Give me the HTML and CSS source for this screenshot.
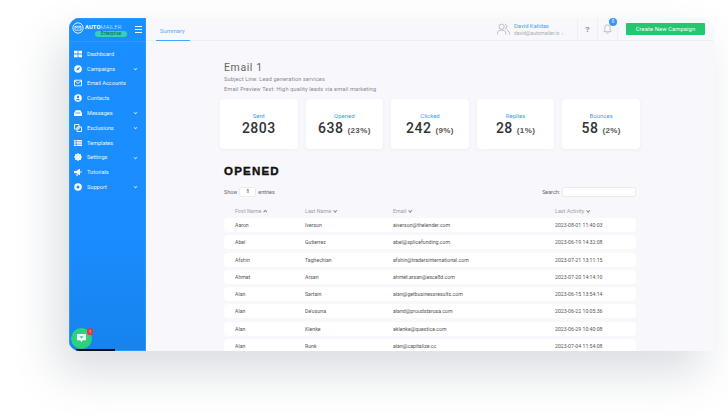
FILE: index.html
```html
<!DOCTYPE html>
<html lang="en">
<head>
<meta charset="utf-8">
<title>Automailer</title>
<link rel="stylesheet" href="styles.css">
</head>
<body>
<div class="window">
  <aside class="sidebar">
    <div class="brand">
      <svg class="brand-icon" viewBox="0 0 14 14"><circle cx="7" cy="7" r="6" fill="none" stroke="#fff" stroke-width="1"/><path d="M3.5 5h7v4.500h-7zM3.500 5l3.500 2.500 3.500-2.500" fill="none" stroke="#fff" stroke-width=".9"/></svg>
      <div class="brand-text">
        <div class="brand-name"><b>AUTO</b>MAILER</div>
        <div class="brand-pill">Enterprise</div>
      </div>
      <div class="burger"><i></i><i></i><i></i></div>
    </div>
    <nav class="nav">
      <div class="nav-item"><svg viewBox="0 0 8 8"><path d="M0 .8h3.600v2.800H0zM4.400 .8H8v2.800H4.400zM0 4.400h3.600v2.800H0zM4.400 4.400H8v2.800H4.400z" fill="#fff"/></svg><span>Dashboard</span></div>
      <div class="nav-item"><svg viewBox="0 0 8 8"><circle cx="4" cy="4" r="3.800" fill="#fff"/><path d="M2 5.500 3.500 3l2.500-1-1 2.500z" fill="#1a8cff"/></svg><span>Campaigns</span><em class="chev"></em></div>
      <div class="nav-item"><svg viewBox="0 0 8 8"><path d="M.5 1.200h7v5.600h-7zM.5 1.500 4 4.500l3.500-3" fill="none" stroke="#fff" stroke-width=".9"/></svg><span>Email Accounts</span></div>
      <div class="nav-item"><svg viewBox="0 0 8 8"><circle cx="4" cy="4" r="3.800" fill="#fff"/><circle cx="4" cy="3" r="1.200" fill="#1a8cff"/><path d="M2 6.200c.4-1.500 3.600-1.500 4 0z" fill="#1a8cff"/></svg><span>Contacts</span></div>
      <div class="nav-item"><svg viewBox="0 0 8 8"><path d="M0 4.200 1.600 1.200h4.800L8 4.200v2.800H0z" fill="#fff"/><path d="M1.500 4h5" stroke="#1a8cff" stroke-width=".8"/></svg><span>Messages</span><em class="chev"></em></div>
      <div class="nav-item"><svg viewBox="0 0 8 8"><path d="M.5.500h4.500v4.500H.5zM3 3h4.500v4.500H3z" fill="none" stroke="#fff" stroke-width=".9"/></svg><span>Exclusions</span><em class="chev"></em></div>
      <div class="nav-item"><svg viewBox="0 0 8 8"><path d="M0 1h1.800v1.500H0zM2.500 1H8v1.500H2.500zM0 3.300h1.800v1.500H0zM2.500 3.300H8v1.500H2.500zM0 5.600h1.800v1.500H0zM2.500 5.600H8v1.500H2.500z" fill="#fff"/></svg><span>Templates</span></div>
      <div class="nav-item"><svg viewBox="0 0 8 8"><circle cx="4" cy="4" r="2.400" fill="none" stroke="#fff" stroke-width="1.800"/><path d="M4 0v8M0 4h8M1.200 1.200l5.600 5.600M6.800 1.200 1.200 6.800" stroke="#fff" stroke-width="1"/></svg><span>Settings</span><em class="chev"></em></div>
      <div class="nav-item"><svg viewBox="0 0 8 8"><path d="M0 3h2l4-2.200v6.400L2 5H0z" fill="#fff"/><path d="M2 5l.6 2.500h1L3.200 5M7 3v2" stroke="#fff" stroke-width=".8"/></svg><span>Tutorials</span></div>
      <div class="nav-item"><svg viewBox="0 0 8 8"><circle cx="4" cy="4" r="3.800" fill="#fff"/><circle cx="4" cy="4" r="1.500" fill="#1a8cff"/></svg><span>Support</span><em class="chev"></em></div>
    </nav>
    <div class="chat">
      <svg viewBox="0 0 12 12"><path d="M1 1h10v7H7.500L6 10 4.500 8H1z" fill="#fff"/><path d="M3.500 3.500h5L6 6z" fill="#2bd17e"/></svg>
      <span class="chat-badge">1</span>
    </div>
    <div class="blackbar"></div>
  </aside>
  <main class="main">
    <header class="topbar">
      <div class="tab">Summary</div>
      <div class="user">
        <svg class="user-icon" viewBox="0 0 14 13"><circle cx="5" cy="4" r="2.800" fill="none" stroke="#a9adb5" stroke-width=".8"/><path d="M.5 12.500V11c0-2 2-3.300 4.500-3.300S9.500 9 9.500 11v1.500M8.500 1.300a2.800 2.800 0 0 1 0 5.400M10.500 7.800c1.700.5 3 1.600 3 3.200v1.500" fill="none" stroke="#a9adb5" stroke-width=".8"/></svg>
        <div class="user-text">
          <div class="user-name">David Kalidas</div>
          <div class="user-mail">david@automailer.io &nbsp;›</div>
        </div>
      </div>
      <div class="tool help">?</div>
      <div class="tool bell">
        <svg viewBox="0 0 10 11"><path d="M5 1a3 3 0 0 0-3 3v3L1 8.500h8L8 7V4a3 3 0 0 0-3-3zM4 9.500a1 1 0 0 0 2 0" fill="none" stroke="#a9adb5" stroke-width=".8"/></svg>
        <span class="bell-badge">0</span>
      </div>
      <div class="action"><button class="create">Create New Campaign</button></div>
    </header>
    <section class="content">
      <h1 class="title">Email 1</h1>
      <p class="meta">Subject Line: Lead generation services</p>
      <p class="meta">Email Preview Text: High quality leads via email marketing</p>
      <div class="cards">
        <div class="card"><div class="card-label">Sent</div><div class="card-value">2803</div></div>
        <div class="card"><div class="card-label">Opened</div><div class="card-value">638 <small>(23%)</small></div></div>
        <div class="card"><div class="card-label">Clicked</div><div class="card-value">242 <small>(9%)</small></div></div>
        <div class="card"><div class="card-label">Replies</div><div class="card-value">28 <small>(1%)</small></div></div>
        <div class="card"><div class="card-label">Bounces</div><div class="card-value">58 <small>(2%)</small></div></div>
      </div>
      <h2 class="section">OPENED</h2>
      <div class="controls">
        <div class="show">Show <span class="select">8</span> entries</div>
        <div class="search">Search: <span class="search-box"></span></div>
      </div>
      <div class="table">
        <div class="row head"><span>First Name<i class="sort up"></i></span><span>Last Name<i class="sort"></i></span><span>Email<i class="sort"></i></span><span>Last Activity<i class="sort"></i></span></div>
        <div class="row"><span>Aaron</span><span>Iverson</span><span>aiverson@thelender.com</span><span>2023-08-01 11:40:03</span></div>
        <div class="row"><span>Abel</span><span>Gutierrez</span><span>abel@splicefunding.com</span><span>2023-06-19 14:32:08</span></div>
        <div class="row"><span>Afshin</span><span>Taghechian</span><span>afshin@tradersinternational.com</span><span>2023-07-21 13:11:15</span></div>
        <div class="row"><span>Ahmet</span><span>Arsan</span><span>ahmet.arsan@exce8d.com</span><span>2023-07-20 14:14:10</span></div>
        <div class="row"><span>Alan</span><span>Sartain</span><span>alan@getbusinessresults.com</span><span>2023-06-15 13:54:14</span></div>
        <div class="row"><span>Alan</span><span>De'osuna</span><span>aland@proudstarusa.com</span><span>2023-06-22 10:05:36</span></div>
        <div class="row"><span>Alan</span><span>Klenke</span><span>aklenke@questice.com</span><span>2023-06-29 10:40:08</span></div>
        <div class="row"><span>Alan</span><span>Runk</span><span>alan@capitalize.cc</span><span>2023-07-04 11:54:08</span></div>
      </div>
    </section>
  </main>
</div>
</body>
</html>
```
FILE: styles.css
```css
* { box-sizing: border-box; }
html, body { margin: 0; height: 417px; overflow: hidden; background: #fff; }
body { padding: 18px 0 0 69px; font-family: "Roboto", "Liberation Sans", sans-serif; color: #555; }

.window {
  width: 645px; height: 333px; display: flex; background: #f7f7fc;
  border-radius: 10px 14px 0 10px; overflow: hidden;
  box-shadow: -12px 22px 45px rgba(70, 90, 110, .2);
}
.sidebar {
  position: relative; width: 77px; flex: none; background: linear-gradient(#1a8fff, #1a8cff 65%, #1683ee); color: #fff;
  box-shadow: inset 0 0 0 1px #2d97ff;
}
.brand { height: 24px; display: flex; align-items: flex-start; padding: 4px 4px 0 3px; border-bottom: 1px solid #3398fd; }
.brand-icon { width: 12px; height: 12px; flex: none; }
.brand-text { width: 44px; margin-left: 1px; }
.brand-name { font-size: 5.800px; line-height: 8px; font-weight: 300; color: #d7eaff; letter-spacing: .1px; white-space: nowrap; margin-top: 1px; }
.brand-name b { font-weight: 700; color: #fff; }
.brand-pill { width: 32px; height: 6px; margin: 0 0 0 10px; border-radius: 3px; background: #35d0b8; color: #0d5a55; font-size: 4.500px; line-height: 6px; text-align: center; }
.burger { width: 7px; margin: 4px 0 0 6px; display: flex; flex-direction: column; gap: 1.500px; }
.burger i { display: block; height: 1.300px; background: #fff; }

.nav { padding-top: 4.500px; }
.nav-item { height: 14.800px; display: flex; align-items: center; padding-left: 5px; font-size: 5.600px; color: #e8f3ff; position: relative; }
.nav-item svg { width: 8px; height: 8px; flex: none; margin-right: 5px; }
.chev { position: absolute; left: 65px; top: 5.500px; width: 3px; height: 3px; border-right: .7px solid #cfe6ff; border-bottom: .7px solid #cfe6ff; transform: rotate(45deg) scale(.85); }

.chat { position: absolute; left: 2px; top: 310px; width: 21px; height: 21px; border-radius: 50%; background: #2bd17e; display: flex; align-items: center; justify-content: center; }
.chat svg { width: 11px; height: 11px; }
.chat-badge { position: absolute; right: -1px; top: 0; width: 6px; height: 7px; border-radius: 3px; background: #f0303c; color: #fff; font-size: 4px; line-height: 7px; text-align: center; }
.blackbar { position: absolute; left: 7px; bottom: 0; width: 39px; height: 2px; background: #0b0b0f; }

.main { flex: 1; min-width: 0; display: flex; flex-direction: column; }
.topbar { height: 23px; flex: none; display: flex; align-items: stretch; padding-left: 10px; border-bottom: 1px solid #eeeef5; }
.tab { width: 34px; height: 23px; padding: 9px 0 0 4px; font-size: 5.800px; line-height: 8px; color: #5aa8f8; border-bottom: 1px solid #3fa6ff; }
.user { display: flex; margin-left: 307px; width: 80px; padding-top: 5px; }
.user-icon { width: 13px; height: 12px; flex: none; margin-right: 4px; }
.user-text { font-size: 5.400px; line-height: 6.500px; }
.user-name { color: #4a9ff8; font-size: 5.800px; }
.user-mail { color: #a9acb4; font-size: 5px; }
.tool { position: relative; width: 20px; border-left: 1px solid #eeeef5; display: flex; align-items: center; justify-content: center; }
.help { font-size: 8px; font-weight: 700; color: #8b8e96; }
.bell { border-right: 1px solid #eeeef5; width: 21px; }
.bell svg { width: 9px; height: 10px; }
.bell-badge { position: absolute; left: 11px; top: 0; width: 8px; height: 8px; border-radius: 50%; background: #3d95f0; color: #fff; font-size: 4.500px; line-height: 8px; text-align: center; }
.action { padding: 5px 0 0 8px; }
.create { display: block; width: 79px; height: 12px; padding: 0; border: 0; border-radius: 1px; background: #22c76f; color: #f0fff6; font: 400 5.800px/12px "Roboto", "Liberation Sans", sans-serif; letter-spacing: .1px; }

.content { padding: 20px 74px 0 74px; }
.title { margin: 0 0 0 4px; font-size: 10.500px; line-height: 13px; font-weight: 400; letter-spacing: .6px; color: #666; }
.meta { margin: 0 0 0 4px; font-size: 5.600px; line-height: 10px; letter-spacing: .15px; color: #8a8a8f; white-space: nowrap; }
.cards { display: grid; grid-template-columns: repeat(5, 1fr); gap: 8px; margin-top: 5px; }
.card { height: 50px; padding-top: 13px; background: #fff; border-radius: 4px; text-align: center; box-shadow: 0 1px 4px rgba(90, 90, 130, .06); }
.card-label { font-size: 6px; line-height: 8px; color: #3d9bff; }
.card-value { margin-top: 1px; font-family: "Roboto", "Liberation Sans", sans-serif; font-size: 14px; line-height: 15px; font-weight: 500; letter-spacing: .5px; color: #333; }
.card-value small { font-family: "Liberation Sans", sans-serif; font-size: 8px; font-weight: 700; color: #555; letter-spacing: .4px; }
.section { margin: 15px 0 0 4px; font-family: "Liberation Sans", sans-serif; font-size: 11.500px; line-height: 14px; font-weight: 900; letter-spacing: 1.200px; color: #111; -webkit-text-stroke: .4px #111; }
.controls { display: flex; justify-content: space-between; align-items: center; margin: 8px 4px 0 4px; height: 12px; font-size: 5.400px; color: #666; }
.show, .search { display: flex; align-items: center; }
.select { width: 17px; height: 10px; margin: 0 2px 0 2px; border: 1px solid #ececf3; border-radius: 2px; background: #fff; font-size: 4.500px; line-height: 8px; text-align: center; }
.search-box { width: 74px; height: 10px; margin-left: 2px; background: #fff; border: 1px solid #ebebf2; border-radius: 2px; }

.table { margin: 8px 4px 0 4px; display: flex; flex-direction: column; gap: 3.300px; }
.row { height: 14px; flex: none; display: grid; grid-template-columns: 70px 88px 162px 1fr; align-items: center; padding-left: 11px; background: #fff; border-radius: 4px; font-size: 5.200px; color: #555; white-space: nowrap; }
.row.head { height: 9px; margin-bottom: -.3px; background: none; color: #a1a1a8; font-size: 5.400px; }
.sort { display: inline-block; width: 2.500px; height: 2.500px; margin: 0 0 1px 2.500px; border-right: .6px solid #888; border-bottom: .6px solid #888; transform: rotate(45deg); }
.sort.up { margin-bottom: -.5px; transform: rotate(225deg); }
```
